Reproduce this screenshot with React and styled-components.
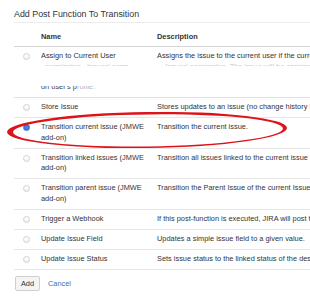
import React from 'react';
import styled, { createGlobalStyle } from 'styled-components';

const GlobalStyle = createGlobalStyle`
    html, body {
        margin: 0;
        padding: 0;
        background: #ffffff;
    }

    body {
        font-family: "Liberation Sans", Arial, sans-serif;
        color: #333333;
    }
`;

const Dialog = styled.div`
    position: relative;
    width: 310px;
    height: 296px;
    overflow: hidden;
    padding-left: 14px;
    box-sizing: border-box;
`;

const Title = styled.h2`
    margin: 0;
    padding-top: 8.5px;
    height: 13.5px;
    font-size: 8.9px;
    line-height: 11px;
    font-weight: normal;
    color: #333333;
    border-bottom: 1px solid #ececec;
`;

const Table = styled.div`
    display: flex;
    flex-direction: column;
    font-size: 7.4px;
    line-height: 10.5px;
`;

const Row = styled.div`
    display: grid;
    grid-template-columns: 27px 116px 1fr;
    padding: ${(p) => (p.$head ? '9px 0 3.5px' : p.$open ? '4.25px 0 0' : '4.25px 0')};
    border-bottom: ${(p) => (p.$open ? 'none' : p.$head ? '1px solid #d6d6d6' : '1px solid #e6e6e6')};
    font-weight: ${(p) => (p.$head ? 'bold' : 'normal')};
`;

const Cell = styled.div`
    white-space: ${(p) => (p.$nowrap ? 'nowrap' : 'normal')};
    overflow: hidden;
    padding-right: ${(p) => (p.$nowrap ? '0' : '6px')};
`;

const Radio = styled.span`
    display: block;
    box-sizing: border-box;
    width: 7px;
    height: 7px;
    margin: 1.75px 0 0 8.5px;
    border-radius: 50%;
    border: 1px solid ${(p) => (p.$checked ? '#2f6fd0' : '#d2d2d2')};
    background: ${(p) => (p.$checked ? 'radial-gradient(circle, #4a8ff0 0, #2a68c8 100%)' : 'linear-gradient(#ffffff, #f2f2f2)')};
`;

const Splice = styled.div`
    display: flex;
    flex-direction: column;
    padding-bottom: 5px;
    border-bottom: 1px solid #e2e2e2;
`;

const TopClip = styled.div`
    height: 1.5px;
    margin-top: 2.5px;
    overflow: hidden;
    color: #c8c8c8;
`;

const BottomClip = styled.div`
    height: 6px;
    margin-top: 20.25px;
    overflow: hidden;
    color: #444444;
`;

const ClipLine = styled.div`
    display: grid;
    grid-template-columns: 27px 116px 1fr;
    margin-top: ${(p) => p.$shift};
    white-space: nowrap;
`;

const Faded = styled.span`
    color: #b5b5b5;
`;

const Footer = styled.div`
    display: flex;
    align-items: center;
    gap: 8px;
    margin-top: 6px;
    margin-left: 1px;
`;

const Button = styled.button`
    font-family: "Liberation Sans", Arial, sans-serif;
    font-size: 7.4px;
    line-height: 13px;
    height: 15px;
    width: 25px;
    padding: 0;
    color: #333333;
    background: #f4f4f4;
    border: 1px solid #cfcfcf;
    border-radius: 2px;
`;

const Link = styled.a`
    font-size: 7.4px;
    color: #3b73af;
    text-decoration: none;
`;

const Marker = styled.svg`
    position: absolute;
    left: 0;
    top: 0;
    pointer-events: none;
`;

const ROWS = [
    { name: 'Store Issue', desc: 'Stores updates to an issue (no change history is created).' },
    { name: 'Transition current issue (JMWE add-on)', desc: 'Transition the current issue.', checked: true },
    { name: 'Transition linked issues (JMWE add-on)', desc: 'Transition all issues linked to the current issue through the specified link type.' },
    { name: 'Transition parent issue (JMWE add-on)', desc: 'Transition the Parent Issue of the current Issue to the specified status.' },
    { name: 'Trigger a Webhook', desc: 'If this post-function is executed, JIRA will post the issue content in JSON format.' },
    { name: 'Update Issue Field', desc: 'Updates a simple issue field to a given value.' },
    { name: 'Update Issue Status', desc: 'Sets issue status to the linked status of the destination workflow step.' },
];

const App = () => {
    return (
        <>
            <GlobalStyle />
            <Dialog>
                <Title>Add Post Function To Transition</Title>
                <Table>
                    <Row $head>
                        <Cell />
                        <Cell>Name</Cell>
                        <Cell $nowrap>Description</Cell>
                    </Row>
                    <Row $open>
                        <Cell><Radio /></Cell>
                        <Cell>Assign to Current User</Cell>
                        <Cell $nowrap>Assigns the issue to the current user if the current user has permission.</Cell>
                    </Row>
                    <Splice>
                        <TopClip>
                            <ClipLine $shift="-2.5px">
                                <span />
                                <span>&nbsp;&nbsp;permission &nbsp;&nbsp;Issues' perm</span>
                                <span>&nbsp;&nbsp;&nbsp;&nbsp;Issues' permission. The issue will be assigned</span>
                            </ClipLine>
                        </TopClip>
                        <BottomClip>
                            <ClipLine $shift="-3.8px">
                                <span />
                                <span>on user's p<Faded>rofile.</Faded></span>
                                <span />
                            </ClipLine>
                        </BottomClip>
                    </Splice>
                    {ROWS.map((row) => (
                        <Row key={row.name}>
                            <Cell><Radio $checked={row.checked} /></Cell>
                            <Cell>{row.name}</Cell>
                            <Cell $nowrap>{row.desc}</Cell>
                        </Row>
                    ))}
                </Table>
                <Footer>
                    <Button type="button">Add</Button>
                    <Link href="#">Cancel</Link>
                </Footer>
                <Marker width="310" height="296" viewBox="0 0 310 296">
                    <g transform="rotate(-0.8 147 130)">
                        <path
                            fill="#de1219"
                            fillRule="evenodd"
                            d="M7 130 A140 18 0 1 0 287 130 A140 18 0 1 0 7 130 Z M13 130.4 A135 16 0 1 0 283 130.4 A135 16 0 1 0 13 130.4 Z"
                        />
                    </g>
                </Marker>
            </Dialog>
        </>
    );
};

export default App;
